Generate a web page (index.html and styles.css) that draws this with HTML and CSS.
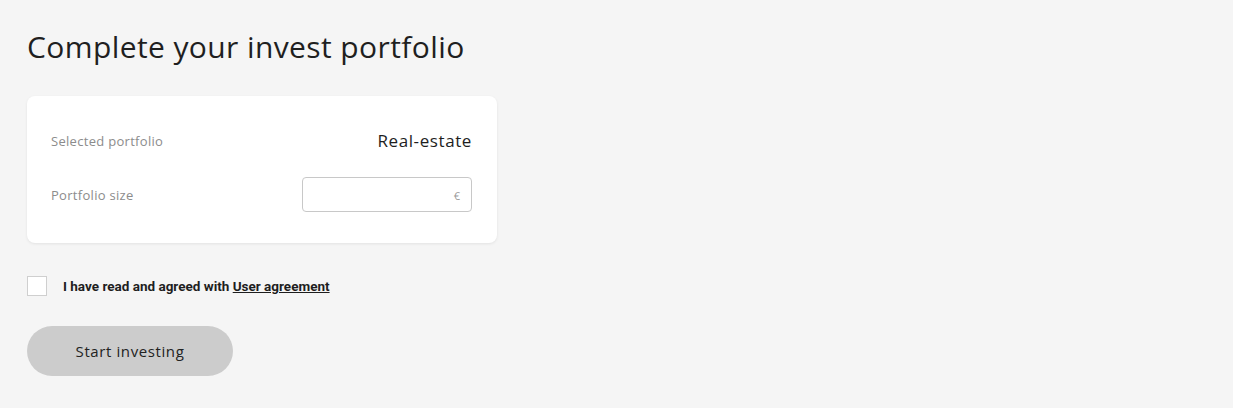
FILE: index.html
```html
<!DOCTYPE html>
<html lang="en">
<head>
<meta charset="utf-8">
<title>Complete your invest portfolio</title>
<link rel="stylesheet" href="styles.css">
</head>
<body>
<main class="page">
  <h1 class="title">Complete your invest portfolio</h1>
  <section class="card">
    <div class="row">
      <span class="label">Selected portfolio</span>
      <span class="value">Real-estate</span>
    </div>
    <div class="row">
      <span class="label">Portfolio size</span>
      <label class="field">
        <input class="field-input" type="text" aria-label="Portfolio size">
        <span class="currency">€</span>
      </label>
    </div>
  </section>
  <label class="agree">
    <span class="box"></span>
    <span class="agree-text">I have read and agreed with <a class="link" href="#">User agreement</a></span>
  </label>
  <button class="cta" type="button">Start investing</button>
</main>
</body>
</html>
```
FILE: styles.css
```css
* { box-sizing: border-box; }
html, body { margin: 0; padding: 0; }
body {
  background: #f5f5f5;
  font-family: "Open Sans", Lato, sans-serif;
  color: #1e1e1e;
}
.page {
  padding: 27px 27px 0;
  display: flex;
  flex-direction: column;
  align-items: flex-start;
}
.title {
  margin: 0;
  font-weight: 400;
  font-size: 30px;
  line-height: 40px;
  color: #1f1f1f;
  letter-spacing: 0.4px;
}
.card {
  margin-top: 29px;
  width: 470px;
  background: #fff;
  border-radius: 8px;
  box-shadow: 0 1px 3px rgba(0,0,0,0.08);
  padding: 27px 25px 31px 24px;
  display: flex;
  flex-direction: column;
  gap: 19px;
}
.row {
  height: 35px;
  display: flex;
  align-items: center;
  justify-content: space-between;
}
.label {
  font-size: 13px;
  color: #8c8c8c;
  letter-spacing: 0.3px;
}
.value {
  font-size: 17px;
  color: #1e1e1e;
  letter-spacing: 0.6px;
}
.field {
  position: relative;
  width: 170px;
  height: 35px;
  display: block;
}
.field-input {
  width: 100%;
  height: 100%;
  border: 1px solid #c8c8c8;
  border-radius: 4px;
  background: #fff;
  padding: 0 28px 0 10px;
  font: inherit;
  outline: none;
}
.currency {
  position: absolute;
  right: 12px;
  top: 50%;
  transform: translateY(-50%);
  font-size: 11px;
  color: #9a9a9a;
}
.agree {
  margin-top: 33px;
  display: flex;
  align-items: center;
  gap: 16px;
}
.box {
  width: 20px;
  height: 20px;
  background: #fff;
  border: 1px solid #cfcfcf;
}
.agree-text {
  font-family: Roboto, "Liberation Sans", sans-serif;
  font-weight: 700;
  font-size: 13.5px;
  color: #1e1e1e;
}
.link {
  color: #1e1e1e;
  text-decoration: underline;
}
.cta {
  margin-top: 30px;
  width: 206px;
  height: 50px;
  border: 0;
  border-radius: 25px;
  background: #cccccc;
  font-family: "Open Sans", Lato, sans-serif;
  font-size: 15px;
  color: #222;
  letter-spacing: 0.6px;
  cursor: pointer;
}
```
